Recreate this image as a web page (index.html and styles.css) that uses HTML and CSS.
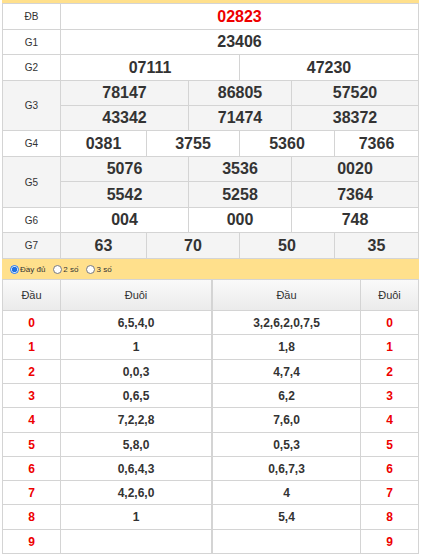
FILE: index.html
```html
<!DOCTYPE html>
<html lang="vi">
<head>
<meta charset="utf-8">
<title>Kết quả xổ số</title>
<link rel="stylesheet" href="styles.css">
</head>
<body>
<div class="wrap">
  <div class="topbar"></div>
  <div class="kq">
    <div class="lbl">ĐB</div><div class="num s6 red">02823</div>
    <div class="lbl">G1</div><div class="num s6">23406</div>
    <div class="lbl">G2</div><div class="num s3">07111</div><div class="num s3">47230</div>
    <div class="lbl r2 gray">G3</div>
    <div class="num s2 gray">78147</div><div class="num s2 gray">86805</div><div class="num s2 gray">57520</div>
    <div class="num s2 gray">43342</div><div class="num s2 gray">71474</div><div class="num s2 gray">38372</div>
    <div class="lbl">G4</div><div class="num">0381</div><div class="num s2">3755</div><div class="num s2">5360</div><div class="num">7366</div>
    <div class="lbl r2 gray">G5</div>
    <div class="num s2 gray">5076</div><div class="num s2 gray">3536</div><div class="num s2 gray">0020</div>
    <div class="num s2 gray">5542</div><div class="num s2 gray">5258</div><div class="num s2 gray">7364</div>
    <div class="lbl">G6</div><div class="num s2">004</div><div class="num s2">000</div><div class="num s2">748</div>
    <div class="lbl gray">G7</div><div class="num gray">63</div><div class="num s2 gray">70</div><div class="num s2 gray">50</div><div class="num gray">35</div>
  </div>
  <div class="opts">
    <label class="opt"><input type="radio" name="mode" checked><span>Đầy đủ</span></label>
    <label class="opt"><input type="radio" name="mode"><span>2 số</span></label>
    <label class="opt"><input type="radio" name="mode"><span>3 số</span></label>
  </div>
  <div class="loto">
    <div class="lt left">
      <div class="hd">Đầu</div><div class="hd">Đuôi</div>
      <div class="dg">0</div><div class="vl">6,5,4,0</div>
      <div class="dg">1</div><div class="vl">1</div>
      <div class="dg">2</div><div class="vl">0,0,3</div>
      <div class="dg">3</div><div class="vl">0,6,5</div>
      <div class="dg">4</div><div class="vl">7,2,2,8</div>
      <div class="dg">5</div><div class="vl">5,8,0</div>
      <div class="dg">6</div><div class="vl">0,6,4,3</div>
      <div class="dg">7</div><div class="vl">4,2,6,0</div>
      <div class="dg">8</div><div class="vl">1</div>
      <div class="dg">9</div><div class="vl"></div>
    </div>
    <div class="lt right">
      <div class="hd">Đầu</div><div class="hd">Đuôi</div>
      <div class="vl">3,2,6,2,0,7,5</div><div class="dg">0</div>
      <div class="vl">1,8</div><div class="dg">1</div>
      <div class="vl">4,7,4</div><div class="dg">2</div>
      <div class="vl">6,2</div><div class="dg">3</div>
      <div class="vl">7,6,0</div><div class="dg">4</div>
      <div class="vl">0,5,3</div><div class="dg">5</div>
      <div class="vl">0,6,7,3</div><div class="dg">6</div>
      <div class="vl">4</div><div class="dg">7</div>
      <div class="vl">5,4</div><div class="dg">8</div>
      <div class="vl"></div><div class="dg">9</div>
    </div>
  </div>
</div>
</body>
</html>
```

FILE: styles.css
```css
html, body {
  margin: 0;
  padding: 0;
  background: #fff;
}
body {
  font-family: "Liberation Sans", Arial, sans-serif;
  color: #333;
}
.wrap {
  width: 417px;
  margin-left: 2px;
}
.topbar {
  height: 3px;
  background: #ffe08c;
}
.kq {
  display: grid;
  grid-template-columns: 57px 85px 41px 50px 51px 42px 83px;
  grid-template-rows: 25px 24px 25px 24px 24px 25px 24px 25px 24px 25px;
  gap: 1px;
  background: #d4d4d4;
  border: 1px solid #d4d4d4;
}
.kq > div {
  background: #fff;
  display: flex;
  align-items: center;
  justify-content: center;
}
.kq > .gray {
  background: #f4f4f4;
}
.lbl {
  font-size: 10px;
  color: #333;
}
.r2 { grid-row: span 2; }
.s2 { grid-column: span 2; }
.s3 { grid-column: span 3; }
.s6 { grid-column: span 6; }
.num {
  font-size: 16px;
  font-weight: bold;
  color: #333;
}
.num.red { color: #e00; }
.opts {
  height: 20px;
  background: #ffe08c;
  display: flex;
  align-items: center;
  padding-left: 8px;
  gap: 8px;
  font-size: 8px;
  color: #333;
}
.opt {
  display: inline-flex;
  align-items: center;
  gap: 1px;
}
.opt input {
  width: 9px;
  height: 9px;
  margin: 0;
  accent-color: #1f6fe0;
}
.loto {
  display: flex;
}
.lt {
  display: grid;
  grid-template-rows: 30px 23px 24px 23px 23px 24px 23px 23px 23px 24px 23px;
  gap: 1px;
  background: #d4d4d4;
  border: 1px solid #d4d4d4;
}
.lt.left { grid-template-columns: 57px 150px; }
.lt.right { grid-template-columns: 147px 57px; }
.lt > div {
  background: #fff;
  display: flex;
  align-items: center;
  justify-content: center;
}
.lt > .hd {
  background: linear-gradient(#fafafa, #ebebeb);
  font-size: 11px;
  color: #333;
}
.dg {
  font-size: 12px;
  font-weight: bold;
  color: #e00;
}
.vl {
  font-size: 12px;
  font-weight: bold;
  color: #333;
}
```
